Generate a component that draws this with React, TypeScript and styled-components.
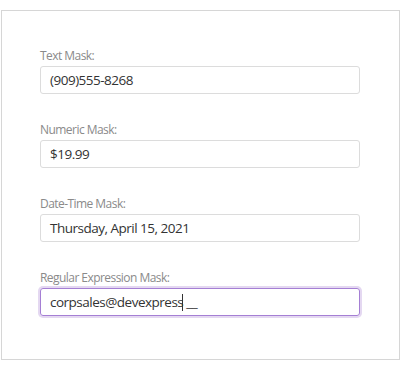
import styled, { createGlobalStyle } from 'styled-components';

const GlobalStyle = createGlobalStyle`
  html, body {
    margin: 0;
    padding: 0;
    background: #fff;
    font-family: 'Open Sans', 'Noto Sans', sans-serif;
  }
`;

const fields = [
  { label: 'Text Mask:', value: '(909)555-8268' },
  { label: 'Numeric Mask:', value: '$19.99' },
  { label: 'Date-Time Mask:', value: 'Thursday, April 15, 2021' },
];

export default function App() {
  return (
    <>
      <GlobalStyle />
      <Page>
        <Frame>
          {fields.map(field => (
            <Field key={field.label}>
              <Label>{field.label}</Label>
              <TextBox>{field.value}</TextBox>
            </Field>
          ))}
          <Field>
            <Label>Regular Expression Mask:</Label>
            <TextBox $focused>
              corpsales@devexpress
              <Caret />
              <Prompt>&nbsp;__</Prompt>
            </TextBox>
          </Field>
        </Frame>
      </Page>
    </>
  );
}

const Page = styled.div`
  padding: 10px 0 0 1px;
  width: 400px;
  box-sizing: border-box;
`;

const Frame = styled.div`
  box-sizing: border-box;
  width: 399px;
  height: 350px;
  border: 1px solid #d6d6d6;
  padding: 36px 39px 0 38px;
  display: flex;
  flex-direction: column;
  gap: 27px;
`;

const Field = styled.div`
  display: flex;
  flex-direction: column;
  gap: 2px;
`;

const Label = styled.label`
  font-size: 12px;
  letter-spacing: -0.55px;
  line-height: 17px;
  color: #8a8a8a;
`;

const TextBox = styled.div<{ $focused?: boolean }>`
  box-sizing: border-box;
  height: 28px;
  display: flex;
  align-items: center;
  padding: 0 9px;
  border: 1px solid ${p => (p.$focused ? '#a57fd4' : '#dcdcdc')};
  border-radius: 3px;
  box-shadow: ${p => (p.$focused ? '0 0 0 2px #e4d8f1' : 'none')};
  font-size: 13.5px;
  letter-spacing: -0.5px;
  color: #333;
  white-space: pre;
`;

const Caret = styled.span`
  display: inline-block;
  width: 1px;
  height: 17px;
  margin-left: -1px;
  background: #333;
`;

const Prompt = styled.span`
  color: #333;
`;
